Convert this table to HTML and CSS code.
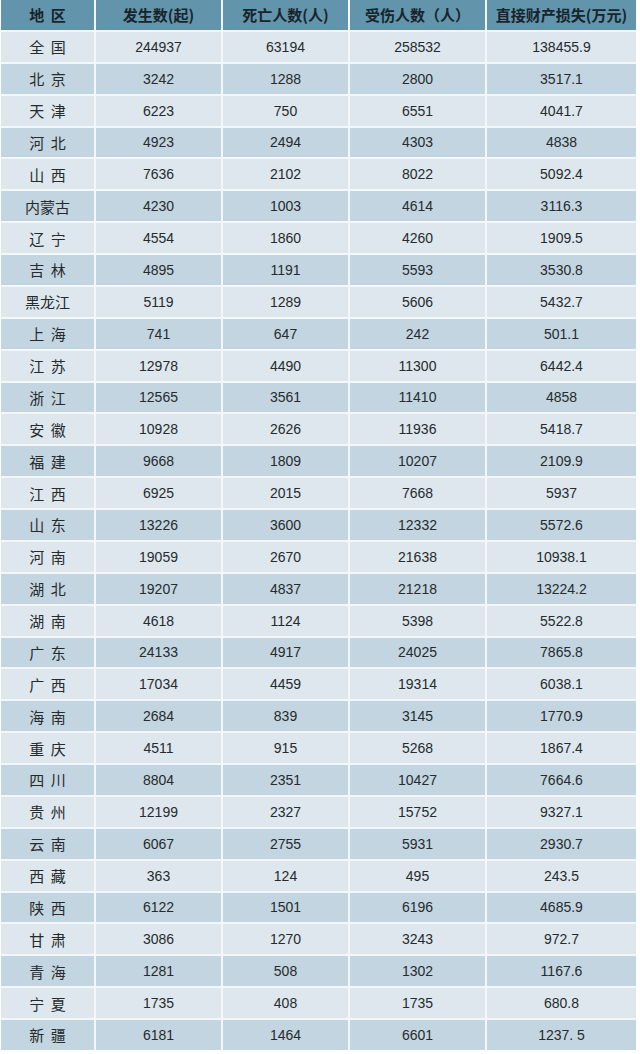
FILE: index.html
```html
<!DOCTYPE html>
<html lang="zh">
<head>
<meta charset="utf-8">
<title>各地区火灾统计</title>
<link rel="stylesheet" href="styles.css">
</head>
<body>
<div class="table">
  <div class="row head"><div class="c name">地 区</div><div class="c">发生数(起)</div><div class="c">死亡人数(人)</div><div class="c">受伤人数（人）</div><div class="c">直接财产损失(万元)</div></div>
  <div class="row odd"><div class="c name">全 国</div><div class="c">244937</div><div class="c">63194</div><div class="c">258532</div><div class="c">138455.9</div></div>
  <div class="row even"><div class="c name">北 京</div><div class="c">3242</div><div class="c">1288</div><div class="c">2800</div><div class="c">3517.1</div></div>
  <div class="row odd"><div class="c name">天 津</div><div class="c">6223</div><div class="c">750</div><div class="c">6551</div><div class="c">4041.7</div></div>
  <div class="row even"><div class="c name">河 北</div><div class="c">4923</div><div class="c">2494</div><div class="c">4303</div><div class="c">4838</div></div>
  <div class="row odd"><div class="c name">山 西</div><div class="c">7636</div><div class="c">2102</div><div class="c">8022</div><div class="c">5092.4</div></div>
  <div class="row even"><div class="c name">内蒙古</div><div class="c">4230</div><div class="c">1003</div><div class="c">4614</div><div class="c">3116.3</div></div>
  <div class="row odd"><div class="c name">辽 宁</div><div class="c">4554</div><div class="c">1860</div><div class="c">4260</div><div class="c">1909.5</div></div>
  <div class="row even"><div class="c name">吉 林</div><div class="c">4895</div><div class="c">1191</div><div class="c">5593</div><div class="c">3530.8</div></div>
  <div class="row odd"><div class="c name">黑龙江</div><div class="c">5119</div><div class="c">1289</div><div class="c">5606</div><div class="c">5432.7</div></div>
  <div class="row even"><div class="c name">上 海</div><div class="c">741</div><div class="c">647</div><div class="c">242</div><div class="c">501.1</div></div>
  <div class="row odd"><div class="c name">江 苏</div><div class="c">12978</div><div class="c">4490</div><div class="c">11300</div><div class="c">6442.4</div></div>
  <div class="row even"><div class="c name">浙 江</div><div class="c">12565</div><div class="c">3561</div><div class="c">11410</div><div class="c">4858</div></div>
  <div class="row odd"><div class="c name">安 徽</div><div class="c">10928</div><div class="c">2626</div><div class="c">11936</div><div class="c">5418.7</div></div>
  <div class="row even"><div class="c name">福 建</div><div class="c">9668</div><div class="c">1809</div><div class="c">10207</div><div class="c">2109.9</div></div>
  <div class="row odd"><div class="c name">江 西</div><div class="c">6925</div><div class="c">2015</div><div class="c">7668</div><div class="c">5937</div></div>
  <div class="row even"><div class="c name">山 东</div><div class="c">13226</div><div class="c">3600</div><div class="c">12332</div><div class="c">5572.6</div></div>
  <div class="row odd"><div class="c name">河 南</div><div class="c">19059</div><div class="c">2670</div><div class="c">21638</div><div class="c">10938.1</div></div>
  <div class="row even"><div class="c name">湖 北</div><div class="c">19207</div><div class="c">4837</div><div class="c">21218</div><div class="c">13224.2</div></div>
  <div class="row odd"><div class="c name">湖 南</div><div class="c">4618</div><div class="c">1124</div><div class="c">5398</div><div class="c">5522.8</div></div>
  <div class="row even"><div class="c name">广 东</div><div class="c">24133</div><div class="c">4917</div><div class="c">24025</div><div class="c">7865.8</div></div>
  <div class="row odd"><div class="c name">广 西</div><div class="c">17034</div><div class="c">4459</div><div class="c">19314</div><div class="c">6038.1</div></div>
  <div class="row even"><div class="c name">海 南</div><div class="c">2684</div><div class="c">839</div><div class="c">3145</div><div class="c">1770.9</div></div>
  <div class="row odd"><div class="c name">重 庆</div><div class="c">4511</div><div class="c">915</div><div class="c">5268</div><div class="c">1867.4</div></div>
  <div class="row even"><div class="c name">四 川</div><div class="c">8804</div><div class="c">2351</div><div class="c">10427</div><div class="c">7664.6</div></div>
  <div class="row odd"><div class="c name">贵 州</div><div class="c">12199</div><div class="c">2327</div><div class="c">15752</div><div class="c">9327.1</div></div>
  <div class="row even"><div class="c name">云 南</div><div class="c">6067</div><div class="c">2755</div><div class="c">5931</div><div class="c">2930.7</div></div>
  <div class="row odd"><div class="c name">西 藏</div><div class="c">363</div><div class="c">124</div><div class="c">495</div><div class="c">243.5</div></div>
  <div class="row even"><div class="c name">陕 西</div><div class="c">6122</div><div class="c">1501</div><div class="c">6196</div><div class="c">4685.9</div></div>
  <div class="row odd"><div class="c name">甘 肃</div><div class="c">3086</div><div class="c">1270</div><div class="c">3243</div><div class="c">972.7</div></div>
  <div class="row even"><div class="c name">青 海</div><div class="c">1281</div><div class="c">508</div><div class="c">1302</div><div class="c">1167.6</div></div>
  <div class="row odd"><div class="c name">宁 夏</div><div class="c">1735</div><div class="c">408</div><div class="c">1735</div><div class="c">680.8</div></div>
  <div class="row even"><div class="c name">新 疆</div><div class="c">6181</div><div class="c">1464</div><div class="c">6601</div><div class="c">1237. 5</div></div>
</div>
</body>
</html>
```

FILE: styles.css
```css
html, body {
  margin: 0;
  padding: 0;
  background: #ffffff;
}

.table {
  margin-left: 1px;
  width: 635px;
  height: 1050px;
  display: flex;
  flex-direction: column;
  gap: 2px;
  background: #f4f7f9;
  font-family: "Liberation Sans", Arial, "Noto Sans CJK SC", sans-serif;
  font-size: 14px;
  color: #262b2e;
}

.row {
  flex: 1 1 0;
  display: grid;
  grid-template-columns: 93px 125px 125px 135px 149px;
  column-gap: 2px;
  background: #f4f7f9;
}

.c {
  display: flex;
  align-items: center;
  justify-content: center;
  white-space: nowrap;
}

.odd .c {
  background: #dde7ed;
}

.even .c {
  background: #c3d5e0;
}

.head .c {
  background: #6294ab;
  color: #17242c;
  font-family: "Noto Sans CJK SC", sans-serif;
  font-weight: 700;
  font-size: 15px;
}

.name {
  font-family: "Noto Sans CJK SC", sans-serif;
  font-size: 15px;
  white-space: pre;
  word-spacing: 3px;
}
```
